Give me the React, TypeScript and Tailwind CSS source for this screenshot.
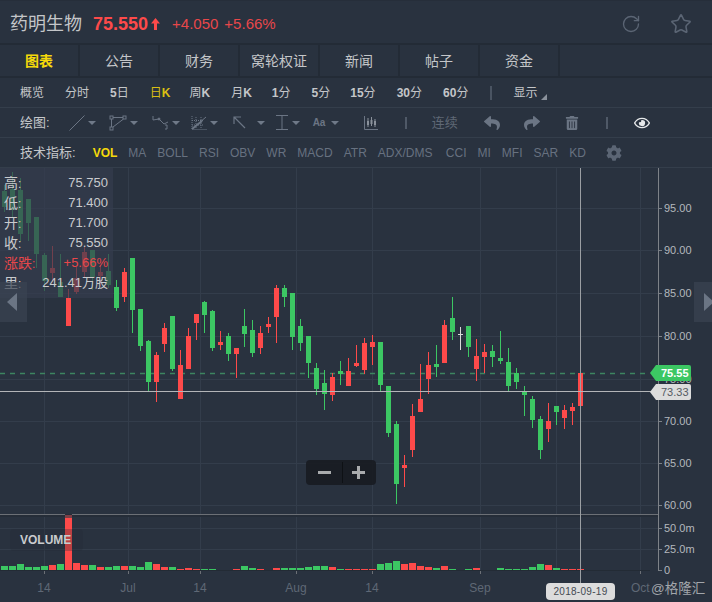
import React from "react";
import { RotateCw, Star } from "lucide-react";
import { FaReply, FaShare, FaTrashAlt, FaRegEye, FaCog } from "react-icons/fa";

type C = [string, number, number, number, number];
const candles: C[] = [
  ["g",191,207,185,212],["g",189,210,172,218],["g",190,234,178,242],["g",199,223,199,241],["g",217,254,217,268],
  ["g",255,281,253,291],["r",268,273,246,282],["g",282,297,254,297],["r",298,326,289,326],["r",278,292,267,294],
  ["r",252,272,247,278],["g",250,277,250,290],["r",272,276,265,286],["g",271,285,254,288],["g",287,308,280,311],
  ["r",272,297,268,302],["g",258,310,258,333],["g",309,346,309,351],["g",341,382,340,391],["r",355,382,352,402],
  ["r",328,344,323,352],["g",316,369,316,371],["r",365,399,350,399],["r",336,369,328,369],["r",314,323,314,340],
  ["g",302,315,301,333],["g",311,348,310,351],["r",342,345,331,350],["g",336,354,333,361],["r",348,354,348,378],
  ["g",326,334,309,347],["g",330,353,320,357],["r",333,348,326,354],["r",324,327,317,333],["r",288,317,285,343],
  ["g",288,297,285,307],["g",293,337,293,350],["g",326,343,319,351],["g",336,363,336,378],["g",368,389,363,395],
  ["g",383,394,370,410],["r",377,395,373,401],["g",371,374,361,385],["r",371,386,358,386],["r",363,366,345,367],
  ["r",343,370,338,374],["r",342,347,335,365],["g",342,385,342,391],["g",386,433,386,437],["g",424,484,421,504],
  ["r",465,468,455,487],["r",416,450,404,457],["r",399,412,364,412],["r",365,379,352,394],["g",364,367,345,377],
  ["r",325,363,320,363],["g",318,332,297,340],["w",334,335,327,350],["g",326,347,326,357],["r",356,369,339,381],
  ["r",352,357,344,373],["g",351,357,345,367],["g",358,361,331,364],["g",362,386,348,391],["g",373,382,368,389],
  ["g",392,395,386,416],["g",399,420,396,428],["g",419,450,416,459],["r",421,429,403,442],["g",406,412,406,425],
  ["r",410,418,405,429],["r",407,411,403,425],["r",373,406,373,406],
];
const vols: [string, number][] = [
  ["g",4],["g",4],["g",6],["g",3],["g",3],["g",4],["r",5],["g",6],["r",52],["r",7],["r",5],["g",5],["r",3],["g",3],["g",4],
  ["r",4],["g",4],["g",3],["g",8],["r",6],["r",3],["g",3],["r",1],["r",2],["r",1],["g",1],["g",1],["g",0],["g",0],["r",1],
  ["g",4],["g",2],["r",1],["r",0],["r",2],["g",2],["g",2],["g",2],["g",3],["g",4],["g",4],["r",3],["g",1],["r",1],["r",1],
  ["r",1],["r",1],["g",6],["g",7],["g",9],["r",6],["r",7],["r",4],["r",3],["g",2],["r",4],["g",1],["g",0],["g",1],["r",2],
  ["r",0],["g",0],["g",2],["g",1],["g",1],["g",1],["g",3],["g",6],["r",5],["g",2],["r",1],["r",1],["r",1],
];
const col: Record<string, string> = { g: "#3cc763", r: "#fd4a4a", w: "#d8d8d8" };
const grid = "#333d4b";
const vGrid = [44, 128, 200, 296, 372, 480, 556, 640];
const hGrid = [208, 250, 293, 336, 379, 421, 463, 505, 528, 549];
const yLabels: [string, number][] = [["95.00",208],["90.00",250],["85.00",293],["80.00",336],["75.00",379],["70.00",421],["65.00",463],["60.00",505],["50.0m",528],["25.0m",549],["0",570]];
const xLabels: [string, number][] = [["14",44],["Jul",128],["14",200],["Aug",296],["14",372],["Sep",480]];

const CJK = "font-['Liberation_Sans','Noto_Sans_CJK_SC',sans-serif]";

function Caret() {
  return <svg width="8" height="4" viewBox="0 0 8 4" className="ml-[3px]"><path d="M0 0H8L4 4Z" fill="#6f7988" /></svg>;
}

function Chart() {
  return (
    <svg width="712" height="434" viewBox="0 168 712 434" className="block" fontFamily="'Liberation Sans', 'Noto Sans CJK SC', sans-serif">
      {vGrid.map((x) => <rect key={x} x={x} y={168} width={1} height={402} fill={grid} />)}
      {hGrid.map((y) => <rect key={y} x={0} y={y} width={658} height={1} fill={grid} />)}
      <line x1={0} x2={650} y1={373.5} y2={373.5} stroke="#3d8560" strokeWidth={1.5} strokeDasharray="5 5" />
      {candles.map((c, i) => (
        <g key={i} fill={col[c[0]]}>
          {c[4] > c[3] && <rect x={4 + 8 * i} y={c[3]} width={1} height={c[4] - c[3]} />}
          <rect x={2 + 8 * i} y={c[1]} width={5} height={c[2] - c[1]} />
        </g>
      ))}
      <rect x={0} y={514} width={658} height={3} fill="#252d38" />
      {vols.map(([t, h], i) => h > 0 && <rect key={i} x={1 + 8 * i} y={570 - h} width={7} height={h} fill={col[t]} />)}
      <rect x={65} y={515} width={7} height={3} fill="#7a4048" />
      <rect x={0} y={514} width={65} height={1} fill="#6c7076" />
      <rect x={72} y={514} width={586} height={1} fill="#6c7076" />
      <rect x={0} y={570} width={650} height={1} fill="#232b35" />
      {[44, 128, 200, 296, 372, 480, 640].map((x) => <rect key={x} x={x} y={571} width={1} height={3} fill="#6c7076" />)}
      <rect x={658} y={168} width={1} height={403} fill="#7d8288" />
      {yLabels.map(([l, y]) => (
        <g key={l}>
          <rect x={659} y={y} width={3} height={1} fill="#7d8288" />
          <text x={664} y={y + 4} fontSize={11} fill="#b4b8bd">{l}</text>
        </g>
      ))}
      {xLabels.map(([l, x]) => <text key={l + x} x={x} y={592} fontSize={12} fill="#5f6875" textAnchor="middle">{l}</text>)}
      <text x={631} y={592} fontSize={12} fill="#5f6875">Oct</text>
      <text x={651} y={593} fontSize={13.5} fill="#a2a6ab">@格隆汇</text>
      <rect x={580} y={168} width={1} height={415} fill="#9b9fa3" />
      <rect x={0} y={391} width={651} height={1} fill="#b3b5b8" />
      <path d="M650 373 L656 365 H689 Q691 365 691 367 V379 Q691 381 689 381 H656 Z" fill="#3cc763" />
      <text x={661} y={377} fontSize={11} fontWeight={700} fill="#ffffff">75.55</text>
      <path d="M650 392 L656 384 H689 Q691 384 691 386 V398 Q691 400 689 400 H656 Z" fill="#dcdcdc" />
      <text x={661} y={396} fontSize={11} fill="#555b63">73.33</text>
    </svg>
  );
}

function InfoRow({ k, v, red }: { k: string; v: string; red?: boolean }) {
  return (
    <div className={`flex h-5 items-center justify-between ${red ? "text-[#e8474a]" : "text-[#c9cbce]"}`}>
      <span className="text-sm">{k}<span className="text-xs">:</span></span>
      <span className="text-[13px]">{v}</span>
    </div>
  );
}

const periods: [string, number][] = [["概览",0],["分时",21],["5日",21],["日K",21],["周K",19],["月K",21],["1分",20],["5分",21],["15分",20],["30分",21],["60分",21]];

export default function App() {
  const tabs = ["图表", "公告", "财务", "窝轮权证", "新闻", "帖子", "资金"];
  const icon = "#6b7584";
  return (
    <div className={`relative flex h-[602px] w-[712px] flex-col overflow-hidden bg-[#29323f] ${CJK}`}>
      <div className="flex h-[43px] shrink-0 items-center border-t border-[#262e3a] pl-[10px] pr-5 pt-1">
        <span className="text-lg text-[#c4c6c9]">药明生物</span>
        <span className="ml-[11px] text-lg font-bold text-[#fd4a4a]">75.550</span>
        <svg width="9" height="12" viewBox="0 0 9 12" className="ml-[3px]"><path d="M4.5 0L9 5.5H6V12H3V5.5H0Z" fill="#fd4a4a" /></svg>
        <span className="ml-3 text-[15px] text-[#e8474a]">+4.050</span>
        <span className="ml-[6px] text-[15px] text-[#e8474a]">+5.66%</span>
        <RotateCw size={20} strokeWidth={1.6} color="#5b6574" className="ml-auto" />
        <Star size={22} strokeWidth={1.7} color="#5b6574" className="ml-[29px]" />
      </div>
      <div className="flex h-[35px] shrink-0 border-y-2 border-[#232b36]">
        {tabs.map((t, i) => (
          <div key={t} className={`flex w-[80px] items-center justify-center border-r-2 border-[#232b36] text-sm ${i === 0 ? "font-bold text-[#f5d90a]" : "text-[#c4c6c9]"}`}>{t}</div>
        ))}
      </div>
      <div className="flex h-[30px] shrink-0 items-center border-b border-[#343e4b] pl-5 text-xs text-[#c4c6c9]">
        {periods.map(([t, m]) => (
          <span key={t} style={{ marginLeft: m }} className={t === "日K" ? "text-[#d9bf12]" : ""}>
            {t.split("").map((c, i) => (/[0-9K]/.test(c) ? <b key={i} className="font-bold">{c}</b> : <span key={i}>{c}</span>))}
          </span>
        ))}
        <span className="ml-[22px] h-[14px] w-[2px] bg-[#4a5462]" />
        <span className="ml-[21px]">显示</span>
        <svg width="6" height="6" viewBox="0 0 6 6" className="ml-1 mt-2"><path d="M6 0V6H0Z" fill="#8a919b" /></svg>
      </div>
      <div className="flex h-[30px] shrink-0 items-center border-b border-[#343e4b] pl-5 text-xs text-[#c4c6c9]">
        <span className="text-[13px]">绘图:</span>
        <svg width="16" height="16" viewBox="0 0 16 16" className="ml-[19px]" fill="none" stroke={icon}><path d="M0.5 15.5L15.5 0.5" /></svg>
        <Caret />
        <svg width="18" height="16" viewBox="0 0 18 16" className="ml-[13px]" fill="none" stroke={icon}><rect x="1" y="1" width="3" height="3" /><rect x="14" y="1" width="3" height="3" /><rect x="1" y="12" width="3" height="3" /><path d="M4 2.5H14M2.5 4V12M4 12L14.5 4" /></svg>
        <Caret />
        <svg width="17" height="15" viewBox="0 0 17 15" className="ml-[14px]" fill="none" stroke={icon}><path d="M1 1V5L7 4L12 9L16 7" /><circle cx="7" cy="4" r="1" fill={icon} /><path d="M13 10H15V14H13" /></svg>
        <Caret />
        <svg width="16" height="14" viewBox="0 0 16 14" className="ml-[11px]" fill="none" stroke={icon}><path d="M1 0V13.5H16M1 4.5H13M1 9H13M5 1V13M10 1V13" strokeDasharray="1 1" /><path d="M1 13L15 1" /><path d="M1 13L11 5" strokeWidth="2" /></svg>
        <Caret />
        <svg width="13" height="13" viewBox="0 0 13 13" className="ml-[15px]" fill="none" stroke={icon} strokeWidth="1.2"><path d="M12 12L1 1M1 8V1H8" /></svg>
        <span className="w-2" /><Caret />
        <svg width="14" height="15" viewBox="0 0 14 15" className="ml-[10px]" fill="none" stroke={icon}><path d="M1 .5H13M1 14.5H13M7 .5V14.5" /></svg>
        <Caret />
        <span className="ml-[13px] w-[15px] text-[10px] font-bold text-[#6b7584]">Aa</span>
        <Caret />
        <svg width="14" height="14" viewBox="0 0 14 14" className="ml-[25px]" fill="none" stroke={icon}><path d="M.5 0V13.5H14" /><path d="M4 2V11M7.5 1V10M11 3V11" stroke="#8a919b" /><path d="M3 5H5V9H3ZM6.5 4H8.5V8H6.5ZM10 5H12V9H10Z" fill="#8a919b" stroke="none" /></svg>
        <span className="ml-[27px] h-[12px] w-[2px] bg-[#4f5967]" />
        <span className="ml-[25px] w-[28px] text-[13px] text-[#5f6875]">连续</span>
        <FaReply size={16} color="#6b7584" className="ml-[24px]" />
        <FaShare size={16} color="#6b7584" className="ml-[24px]" />
        <FaTrashAlt size={14} color="#6b7584" className="ml-[25px]" />
        <span className="ml-[27px] h-[12px] w-[2px] bg-[#4f5967]" />
        <FaRegEye size={16} color="#e6e8ea" className="ml-[26px]" />
      </div>
      <div className="flex h-[30px] shrink-0 items-center gap-[11px] border-b border-[#343e4b] pl-5 text-xs text-[#677180]">
        <span className="mr-[6px] text-[13px] text-[#c4c6c9]">技术指标:</span>
        <span className="font-bold text-[#f5d90a]">VOL</span>
        {["MA","BOLL","RSI","OBV","WR","MACD","ATR"].map((t) => <span key={t}>{t}</span>)}
        <span className="w-[57px] whitespace-nowrap">ADX/DMS</span>
        {["CCI","MI","MFI","SAR","KD"].map((t) => <span key={t}>{t}</span>)}
        <FaCog size={16} color="#5b6574" className="ml-[9px]" />
      </div>
      <div className="relative flex-1">
        <Chart />
        <div className="absolute left-0 top-0 h-[130px] w-[113px] bg-[#343c4e]/70 pl-1 pr-[5px] pt-[5px]">
          <InfoRow k="高" v="75.750" />
          <InfoRow k="低" v="71.400" />
          <InfoRow k="开" v="71.700" />
          <InfoRow k="收" v="75.550" />
          <InfoRow k="涨跌" v="+5.66%" red />
          <InfoRow k="里" v="241.41万股" />
        </div>
        <div className="absolute left-0 top-[114px] flex h-10 w-[27px] items-center bg-[#3a4352]/70 pl-[7px]">
          <svg width="10" height="18" viewBox="0 0 10 18"><path d="M10 0V18L0 9Z" fill="#6b7584" /></svg>
        </div>
        <div className="absolute right-0 top-[114px] flex h-10 w-[18px] items-center bg-[#3a4352]/70 pl-[10px]">
          <svg width="8" height="18" viewBox="0 0 8 18" className="shrink-0"><path d="M0 0V18L10 9Z" fill="#6b7584" /></svg>
        </div>
        <div className="absolute left-[10px] top-[361px] flex h-[22px] w-[73px] items-center rounded-sm bg-[#232b36]/30 pl-[10px] text-xs font-bold text-[#c9cbce]">VOLUME</div>
        <div className="absolute left-[306px] top-[292px] flex h-[25px] w-[70px] items-center rounded bg-[#171b21]/90">
          <span className="flex w-9 justify-center"><span className="h-[3px] w-[13px] bg-[#a9abad]" /></span>
          <span className="h-[21px] w-px bg-[#0e1115]" />
          <svg width="13" height="13" viewBox="0 0 13 13" className="ml-[9px]"><path d="M5 0H8V5H13V8H8V13H5V8H0V5H5Z" fill="#a9abad" /></svg>
        </div>
        <div className="absolute left-[546px] top-[415px] flex h-[17px] w-[69px] items-center justify-center rounded bg-[#dcdcdc] text-[10px] tracking-[0.3px] text-[#444a52]">2018-09-19</div>
      </div>
    </div>
  );
}
